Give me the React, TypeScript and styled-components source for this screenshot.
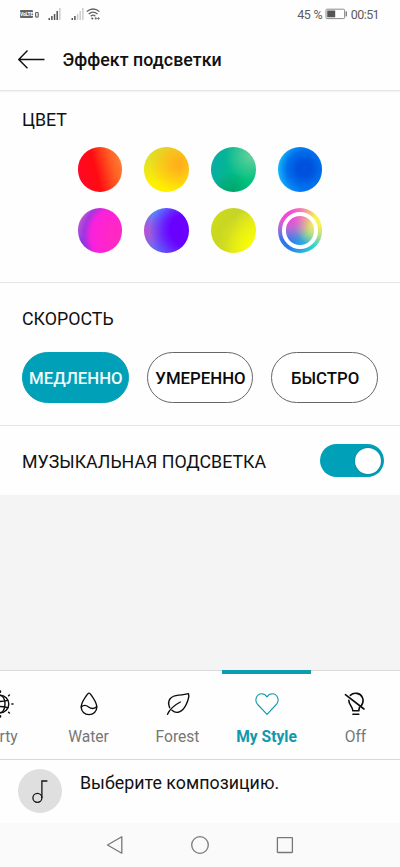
import React from "react";
import styled, { createGlobalStyle } from "styled-components";

const Global = createGlobalStyle`
  * { box-sizing: border-box; }
  body { margin: 0; background: #fff; }
  button { font: inherit; padding: 0; border: 0; background: none; }
`;

const Screen = styled.div`
  width: 400px;
  height: 867px;
  overflow: hidden;
  display: flex;
  flex-direction: column;
  background: #fefefe;
  color: #111;
  font-family: Roboto, sans-serif;
`;

const StatusBar = styled.div`
  height: 28px;
  flex: none;
  display: flex;
  justify-content: space-between;
  padding: 0 21px 0 20px;
`;

const StatusGroup = styled.div`
  display: flex;
  align-items: center;
`;

const StatusText = styled.span<{ $spacing?: number }>`
  font-size: 12.5px;
  line-height: 28px;
  padding-top: 1px;
  color: #5c5c5c;
  white-space: nowrap;
  letter-spacing: ${(p) => p.$spacing ?? 0}px;
  word-spacing: 1px;
`;

const BatteryIcon = styled.svg`
  margin: 0 3px 0 3px;
`;

const Header = styled.header`
  height: 63px;
  flex: none;
  display: flex;
  align-items: center;
  gap: 17.5px;
  padding-left: 18px;
  border-bottom: 1px solid #e4e4e4;
  box-shadow: 0 1px 1px #f4f4f4;
`;

const Title = styled.h1`
  margin: 1px 0 0;
  font-size: 17.8px;
  font-weight: 500;
  line-height: 24px;
  letter-spacing: 0.05px;
  white-space: nowrap;
`;

const Section = styled.section<{ $height: number; $top: number }>`
  flex: none;
  height: ${(p) => p.$height}px;
  padding: ${(p) => p.$top}px 22px 0;
  border-bottom: 1px solid #e6e6e6;
`;

const Label = styled.h2`
  margin: 0;
  font-size: 17.8px;
  font-weight: 400;
  line-height: 25px;
  white-space: nowrap;
`;

const Palette = styled.div`
  display: grid;
  grid-template-columns: repeat(4, 44.5px);
  gap: 16.5px 22.2px;
  padding: 15.3px 0 0 55.7px;
`;

const Swatch = styled.button<{ $fill: string }>`
  width: 44.5px;
  height: 44.5px;
  border-radius: 50%;
  background: ${(p) => p.$fill};
  display: grid;
  place-items: center;
`;

const SwatchRing = styled.span`
  width: 36.5px;
  height: 36.5px;
  border: 4.7px solid #fff;
  border-radius: 50%;
`;

const SpeedRow = styled.div`
  display: flex;
  gap: 17.8px;
  margin-top: 20.5px;
`;

const SpeedButton = styled.button<{ $active?: boolean }>`
  && {
    width: 106.8px;
    height: 51.5px;
    border-radius: 26px;
    border: 1.4px solid ${(p) => (p.$active ? "#00a0b8" : "#666")};
    background: ${(p) => (p.$active ? "#00a0b8" : "#fff")};
    color: ${(p) => (p.$active ? "#f2fcfd" : "#0a0a0a")};
    font-size: 16.8px;
    font-weight: 500;
    white-space: nowrap;
    padding: 2px 0 0 1px;
    display: flex;
    align-items: center;
    justify-content: center;
  }
`;

const MusicRow = styled.section`
  flex: none;
  height: 69px;
  display: flex;
  align-items: center;
  justify-content: space-between;
  padding: 2px 16px 0 22px;
`;

const Switch = styled.button`
  && {
    width: 64px;
    height: 33px;
    margin-top: -2px;
    padding: 0 3px;
    border-radius: 17px;
    background: #00a0b8;
    display: flex;
    align-items: center;
    justify-content: flex-end;
  }
`;

const Knob = styled.span`
  width: 26px;
  height: 26px;
  border-radius: 50%;
  background: #fff;
  box-shadow: 0 0 2px rgba(0, 60, 70, 0.45);
`;

const Filler = styled.div`
  flex: 1;
  background: #f4f4f4;
`;

const Tabs = styled.nav`
  flex: none;
  height: 90px;
  display: flex;
  margin-left: -45px;
  border-top: 1px solid #dcdcdc;
  border-bottom: 1px solid #d8d8d8;
`;

const Tab = styled.button<{ $active?: boolean }>`
  && {
    flex: none;
    width: 89px;
    margin-top: -1px;
    border-top: 4px solid ${(p) => (p.$active ? "#0d9db0" : "transparent")};
    display: flex;
    flex-direction: column;
    align-items: center;
    justify-content: flex-start;
    gap: 9px;
    padding-top: 16px;
    color: ${(p) => (p.$active ? "#1099ac" : "#777")};
    font-size: 15.6px;
    font-weight: ${(p) => (p.$active ? 700 : 400)};
    line-height: 20px;
  }
`;

const TabIcon = styled.svg<{ $active?: boolean }>`
  width: 28px;
  height: 28px;
  flex: none;
  fill: none;
  stroke: ${(p) => (p.$active ? "#1099ac" : "#0c0c0c")};
  stroke-width: 1.4;
  stroke-linecap: round;
  stroke-linejoin: round;
`;

const Player = styled.div`
  flex: none;
  height: 63px;
  display: flex;
  gap: 18px;
  padding: 9px 0 0 18px;
`;

const Cover = styled.div`
  width: 44px;
  height: 44px;
  border-radius: 50%;
  background: #dfdfdf;
`;

const PlayerText = styled.p`
  margin: 1px 0 0;
  font-size: 17.8px;
  line-height: 26px;
  letter-spacing: 0.03px;
  white-space: nowrap;
`;

const NavBar = styled.div`
  flex: none;
  height: 44px;
  background: #fafafa;
  display: flex;
  justify-content: center;
  align-items: center;
  gap: 61px;
`;

const NavIcon = styled.svg`
  width: 24px;
  height: 24px;
  fill: none;
  stroke: #777;
  stroke-width: 1.3;
  stroke-linejoin: round;
`;

const swatches = [
  "linear-gradient(75deg, #ff0826 5%, #ff0b12 42%, #ff5b22 72%, #ff8a38 100%)",
  "radial-gradient(circle at 76% 38%, #ffb11b 0 8%, rgba(255,185,26,.75) 30%, transparent 65%), linear-gradient(165deg, #dcde2c 15%, #fff000 70%)",
  "radial-gradient(circle at 90% 18%, #68d0a0, transparent 48%), radial-gradient(circle at 45% 100%, #00a468, transparent 40%), linear-gradient(100deg, #06afa0 15%, #00c37d 75%)",
  "radial-gradient(circle at 60% 48%, #0052de 0 22%, #006dea 48%, transparent 80%), linear-gradient(100deg, #1ed2ff, #0070ff 75%)",
  "radial-gradient(ellipse 72% 80% at 86% 62%, #ff28c4 0 20%, #fb20dc 78%, rgba(160,50,225,.9) 100%, transparent 120%), linear-gradient(175deg, #c95bcf 10%, #a54ddd 55%, #3b28ee 85%)",
  "radial-gradient(circle at 92% 48%, #6a00ff 0 32%, rgba(108,10,255,.8) 47%, transparent 75%), radial-gradient(circle at 0% 52%, #bf4fd0, transparent 45%), linear-gradient(#5190ff, #5e68f5)",
  "radial-gradient(circle at 95% 85%, #fbff00, transparent 65%), linear-gradient(110deg, #d0de12, #c6d32a 45%, #ecef22)",
  "radial-gradient(circle at 22% 18%, #f048dc 8%, transparent 52%), radial-gradient(circle at 92% 28%, #f8f452 8%, transparent 50%), radial-gradient(circle at 12% 80%, #2878ee 12%, transparent 58%), linear-gradient(180deg, #f2a49c 10%, #8cc8b0 50%, #2fd4d0 80%)",
];

function SignalIcon({ level }: { level: number }) {
  return (
    <svg width="14" height="14" viewBox="0 0 14 14">
      {[2, 4, 6, 9, 12].map((h, i) => (
        <rect key={h} x={0.5 + i * 2.65} y={13 - h} width="1.5" height={h} fill={i < level ? "#565656" : "#ccc"} />
      ))}
    </svg>
  );
}

const VolteBadge = styled.span`
  width: 13px;
  height: 8px;
  margin: 0 2px 0 0;
  border-radius: 1px;
  background: #666;
  color: #fff;
  font-size: 5px;
  line-height: 8px;
  font-weight: 700;
  letter-spacing: -0.2px;
  text-align: center;
`;

const SignalGap = styled.span<{ $width: number }>`
  width: ${(p) => p.$width}px;
`;

export default function App() {
  return (
    <>
      <Global />
      <Screen>
        <StatusBar>
          <StatusGroup>
            <VolteBadge>VoLTE</VolteBadge>
            <svg width="4" height="8" viewBox="0 0 4 8">
              <rect x="0.6" y="2.5" width="2.6" height="4.6" rx="0.8" fill="none" stroke="#666" strokeWidth="1.2" />
            </svg>
            <SignalGap $width={9} />
            <SignalIcon level={4} />
            <SignalGap $width={8.5} />
            <SignalIcon level={2} />
            <SignalGap $width={1.5} />
            <svg width="15" height="14" viewBox="0 0 15 14" fill="none" stroke="#626262" strokeWidth="1.3">
              <path d="M0.8 4.6Q7 -0.6 13.4 4.6M2.7 7Q7 3.3 11.5 7M4.7 9.2Q7 7.1 9.4 9.2" />
              <circle cx="6.3" cy="11.6" r="1" fill="#555" stroke="none" />
              <path d="M9 11.5h4.3M10.3 10l-1.4 1.5 1.4 1.3M12 10l1.4 1.5-1.4 1.3" strokeWidth="0.8" />
            </svg>
          </StatusGroup>
          <StatusGroup>
            <StatusText $spacing={-0.7}>45 %</StatusText>
            <BatteryIcon width="23" height="12" viewBox="0 0 23 12">
              <rect x="1" y="1.2" width="18.6" height="9.4" rx="1" fill="#fff" stroke="#8a8a8a" />
              <rect x="2.2" y="2.5" width="8" height="6.8" fill="#555" />
              <rect x="20.6" y="3.4" width="1.3" height="5" fill="#777" />
            </BatteryIcon>
            <StatusText $spacing={-0.6}>00:51</StatusText>
          </StatusGroup>
        </StatusBar>

        <Header>
          <svg width="27" height="20" viewBox="0 0 27 20" fill="none" stroke="#111" strokeWidth="1.4">
            <path d="M0.8 10.5H26.5M9.5 1.5L0.8 10.5L9.5 19.3" />
          </svg>
          <Title>Эффект подсветки</Title>
        </Header>

        <Section $height={192} $top={16}>
          <Label>ЦВЕТ</Label>
          <Palette>
            {swatches.map((fill, i) => (
              <Swatch key={fill} $fill={fill}>
                {i === swatches.length - 1 && <SwatchRing />}
              </Swatch>
            ))}
          </Palette>
        </Section>

        <Section $height={143} $top={23}>
          <Label>СКОРОСТЬ</Label>
          <SpeedRow>
            <SpeedButton $active>МЕДЛЕННО</SpeedButton>
            <SpeedButton>УМЕРЕННО</SpeedButton>
            <SpeedButton>БЫСТРО</SpeedButton>
          </SpeedRow>
        </Section>

        <MusicRow>
          <Label>МУЗЫКАЛЬНАЯ ПОДСВЕТКА</Label>
          <Switch role="switch" aria-checked="true">
            <Knob />
          </Switch>
        </MusicRow>

        <Filler />

        <Tabs>
          <Tab>
            <TabIcon viewBox="0 0 28 28">
              <circle cx="14" cy="14" r="8.8" />
              <ellipse cx="14" cy="14" rx="5" ry="8.8" />
              <path d="M6.2 10.4Q14 12.6 21.8 10.4M6.2 17.6Q14 15.4 21.8 17.6M25.9 14H27M22.6 5.7L23.4 4.9M22.6 22.3L23.4 23.1M14.5 1V2.2M14.5 25.8V27" />
            </TabIcon>
            Party
          </Tab>
          <Tab>
            <TabIcon viewBox="0 0 28 28">
              <path d="M14 3.1C12.8 3.1 6.2 12.2 6.2 17C6.2 21.6 9.6 24.6 14 24.6S21.8 21.6 21.8 17C21.8 12.2 15.2 3.1 14 3.1Z" />
              <path d="M6.3 17C9 14.3 11.2 15.1 13.6 17C16.3 19.1 19 19 21.6 16.8" />
            </TabIcon>
            Water
          </Tab>
          <Tab>
            <TabIcon viewBox="0 0 28 28">
              <path d="M3.5 24.3C6 18.8 10.2 15.2 16.3 12" />
              <path d="M5.7 17.8C2.5 10 7 5.7 14.7 5.1C19 4.8 21.8 4 24.4 3.6C25.7 7 24 11 21.8 15.3C18.4 22.1 12.6 24.4 8 20.3" />
            </TabIcon>
            Forest
          </Tab>
          <Tab $active>
            <TabIcon $active viewBox="0 0 28 28">
              <path d="M14 24.3L4.7 14.5C0.7 9.7 4.1 3.7 8.7 3.7C11 3.7 12.8 5 14 6.9C15.2 5 17 3.7 19.3 3.7C23.9 3.7 27.3 9.7 23.3 14.5Z" strokeWidth="1.1" />
            </TabIcon>
            My Style
          </Tab>
          <Tab>
            <TabIcon viewBox="0 0 28 28">
              <path d="M3.4 4.7L22 19M8.3 5.4C12 1.7 18.5 2.9 20.5 7.7C21.6 10.4 20.9 13.3 19.3 15.7M6.8 10.2C6.8 14.6 10.4 16.2 10.9 20.8H16.8C17 19.3 17.2 18.2 17.5 17.4M10.9 24.2H16.8" strokeWidth="1.6" />
            </TabIcon>
            Off
          </Tab>
        </Tabs>

        <Player>
          <Cover>
            <svg width="44" height="44" viewBox="0 0 44 44" fill="none" stroke="#151515" strokeWidth="1.3">
              <circle cx="19.4" cy="28.8" r="4.5" />
              <path d="M23.9 29V12H29.4" />
            </svg>
          </Cover>
          <PlayerText>Выберите композицию.</PlayerText>
        </Player>

        <NavBar>
          <NavIcon viewBox="0 0 24 24">
            <path d="M4.5 12L18.8 3.8V20.2Z" />
          </NavIcon>
          <NavIcon viewBox="0 0 24 24">
            <circle cx="12" cy="12" r="8.3" />
          </NavIcon>
          <NavIcon viewBox="0 0 24 24">
            <rect x="4.4" y="4.7" width="15" height="14.8" rx="0.5" />
          </NavIcon>
        </NavBar>
      </Screen>
    </>
  );
}
